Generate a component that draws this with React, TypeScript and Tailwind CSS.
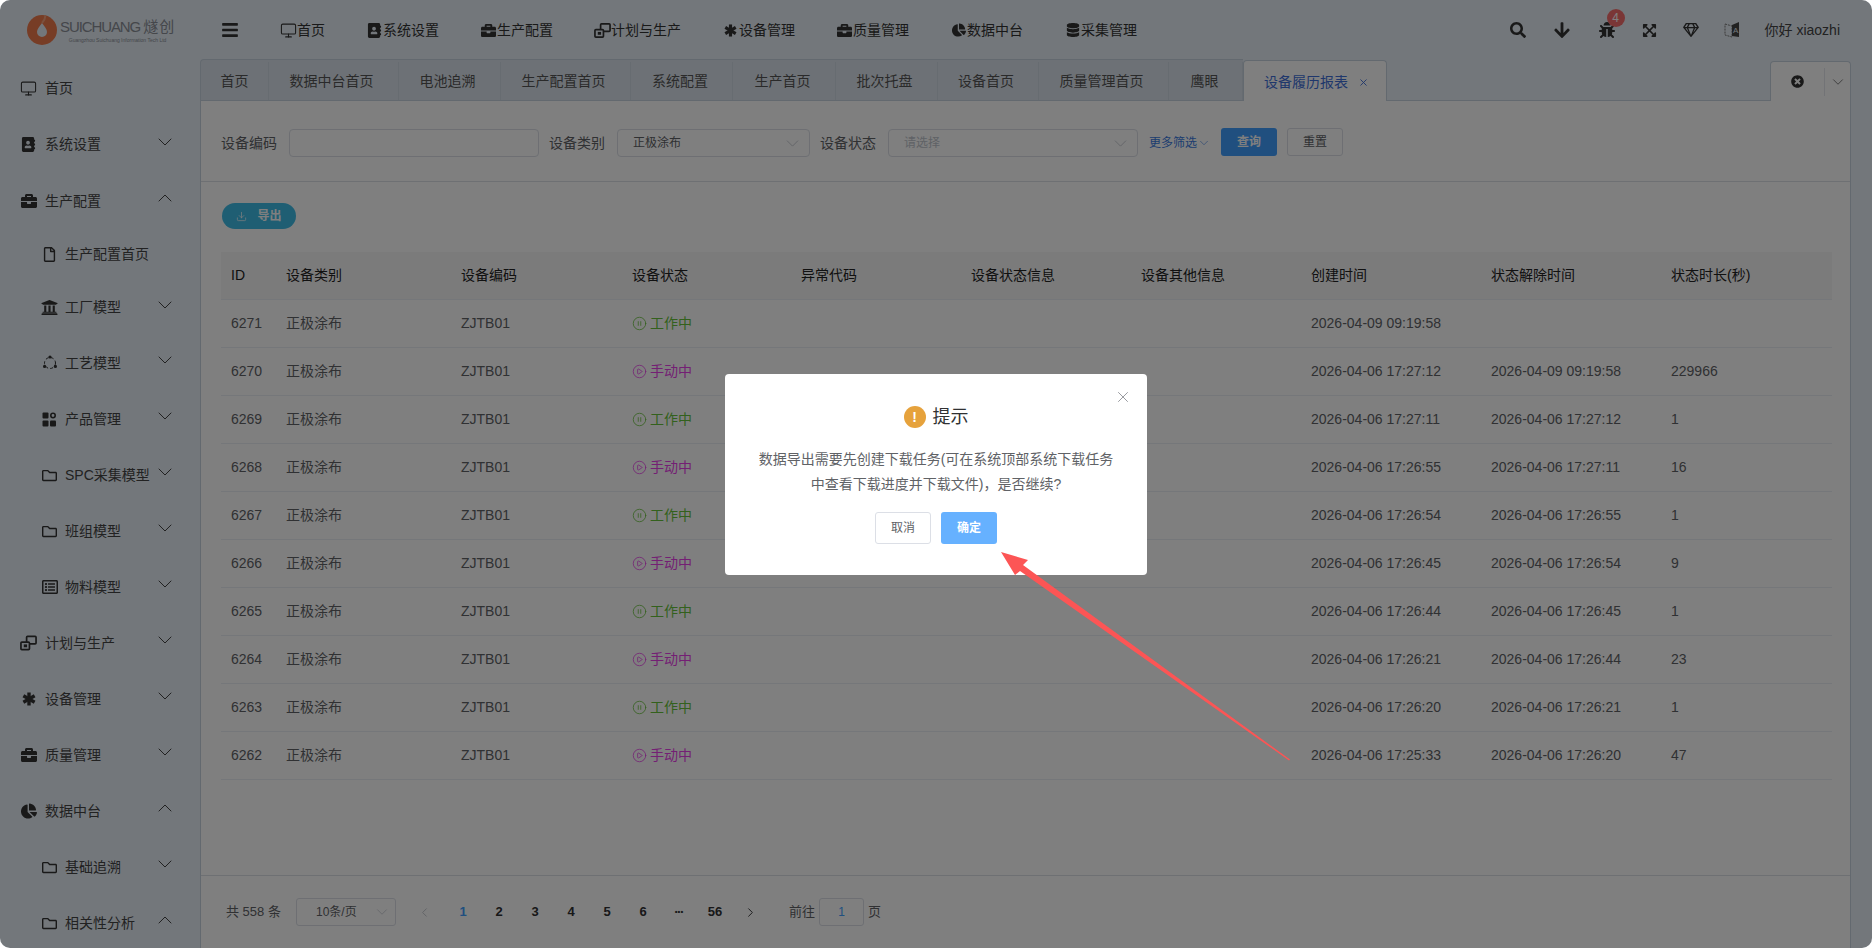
import { ReactNode } from "react";
import { ChevronDown, ChevronUp, ChevronLeft, ChevronRight, Monitor, X, Download, CirclePause, CirclePlay } from "lucide-react";
import {
  FaAddressBook,
  FaArrowDown,
  FaBars,
  FaBriefcase,
  FaBug,
  FaChartPie,
  FaDatabase,
  FaExpandArrowsAlt,
  FaRegFile,
  FaRegFolder,
  FaRegGem,
  FaRegListAlt,
  FaSearch,
  FaTimesCircle,
  FaUniversity,
} from "react-icons/fa";

// Small drawings that the icon packages have no match for
const ProcessIcon = () => (
  <svg width="16" height="16" viewBox="0 0 16 16" fill="none">
    <circle cx="8" cy="8" r="5.5" stroke="currentColor" strokeDasharray="3 2.2" />
    <circle cx="8" cy="2" r="1.6" fill="currentColor" />
    <circle cx="2.6" cy="11.4" r="1.6" fill="currentColor" />
    <circle cx="13.4" cy="11.4" r="1.6" fill="currentColor" />
  </svg>
);

const AppsIcon = () => (
  <svg width="15" height="15" viewBox="0 0 15 15" fill="currentColor">
    <rect x="0.5" y="0.5" width="6" height="6" rx="1" />
    <circle cx="11" cy="3.5" r="2.2" fill="none" stroke="currentColor" strokeWidth="1.6" />
    <rect x="0.5" y="8.5" width="6" height="6" rx="1" />
    <rect x="8" y="8.5" width="6" height="6" rx="1" />
  </svg>
);

const StarIcon = ({ size }: { size: number }) => (
  <svg width={size} height={size} viewBox="0 0 14 14" stroke="currentColor" strokeWidth="3.4">
    <line x1="7" y1="0.5" x2="7" y2="13.5" />
    <line x1="1.4" y1="3.7" x2="12.6" y2="10.3" />
    <line x1="12.6" y1="3.7" x2="1.4" y2="10.3" />
  </svg>
);

const PlanIcon = ({ size }: { size: number }) => (
  <svg width={size} height={size} viewBox="0 0 18 16" fill="none" stroke="currentColor" strokeWidth="1.8">
    <rect x="1" y="7" width="9" height="8" rx="1" />
    <rect x="4" y="9.5" width="3.5" height="3" fill="currentColor" stroke="none" />
    <path d="M7 7V2a1 1 0 0 1 1-1h8a1 1 0 0 1 1 1v6a1 1 0 0 1-1 1h-6" />
  </svg>
);

const TranslateIcon = () => (
  <svg width="16" height="18" viewBox="0 0 16 18">
    <path d="M1 3l7 2v11l-7-2z" fill="none" stroke="#777" strokeDasharray="2 1" />
    <path d="M8 4l7-3v15l-7-1z" fill="#444" />
    <text x="9" y="12" fontSize="8" fill="#e6eef6">A</text>
  </svg>
);

const Logo = () => (
  <div className="flex h-[60px] w-[200px] shrink-0 items-center pl-[27px]">
    <svg width="30" height="30" viewBox="0 0 30 30" className="shrink-0">
      <circle cx="15" cy="15" r="15" fill="#ee7a4c" />
      <path d="M15 8c3 4 5 6 5 9a5 5 0 0 1-10 0c0-3 2-5 5-9z" fill="#e6eef6" />
      <path d="M18 0c1 4-1 6-3 8" stroke="#f7a27c" strokeWidth="2" fill="none" />
    </svg>
    <div className="ml-[3px] flex flex-col">
      <div className="whitespace-nowrap text-[15px] leading-[19px] tracking-[-1.1px] text-[#8a8f96]">
        SUICHUANG <span className="tracking-[1px]">燧创</span>
      </div>
      <div className="mt-[1px] whitespace-nowrap text-center text-[5px] leading-[6px] text-[#8a8f96]">
        Guangzhou Suichuang Information Tech Ltd
      </div>
    </div>
  </div>
);

const topMenus: { label: string; icon: ReactNode; w: string }[] = [
  { label: "首页", icon: <Monitor size={17} strokeWidth={1.5} />, w: "w-[86px]" },
  { label: "系统设置", icon: <FaAddressBook size={15} />, w: "w-[114px]" },
  { label: "生产配置", icon: <FaBriefcase size={15} />, w: "w-[114px]" },
  { label: "计划与生产", icon: <PlanIcon size={17} />, w: "w-[128px]" },
  { label: "设备管理", icon: <StarIcon size={13} />, w: "w-[114px]" },
  { label: "质量管理", icon: <FaBriefcase size={15} />, w: "w-[114px]" },
  { label: "数据中台", icon: <FaChartPie size={14} />, w: "w-[114px]" },
  { label: "采集管理", icon: <FaDatabase size={14} />, w: "w-[100px]" },
];

const TopBar = () => (
  <header className="flex h-[60px] shrink-0 items-center text-[14px] text-[#333]">
    <Logo />
    <FaBars size={18} className="ml-[21px] mr-[41px] text-[#333]" />
    {topMenus.map((m) => (
      <div key={m.label} className={`flex items-center ${m.w}`}>
        <span className="flex w-[17px] shrink-0 justify-center">{m.icon}</span>
        <span className="whitespace-nowrap">{m.label}</span>
      </div>
    ))}
    <div className="ml-auto flex items-center pr-[32px]">
      <FaSearch size={16} className="mr-[27px]" />
      <FaArrowDown size={18} className="mr-[28px]" />
      <div className="relative mr-[27px]">
        <FaBug size={16} />
        <span className="absolute left-[8px] top-[-13px] flex h-[18px] w-[18px] items-center justify-center rounded-full bg-[#f56c6c] text-[12px] text-white">
          4
        </span>
      </div>
      <FaExpandArrowsAlt size={15} className="mr-[26px]" />
      <FaRegGem size={16} className="mr-[25px]" />
      <span className="mr-[25px] flex text-[#555]">
        <TranslateIcon />
      </span>
      <span className="text-[14px] text-[#444]">你好 xiaozhi</span>
    </div>
  </header>
);

const sideMenus: { label: string; icon: ReactNode; sub?: boolean; arrow?: "up" | "down"; h: string }[] = [
  { label: "首页", icon: <Monitor size={17} strokeWidth={1.5} />, h: "h-[56px]" },
  { label: "系统设置", icon: <FaAddressBook size={15} />, arrow: "down", h: "h-[57px]" },
  { label: "生产配置", icon: <FaBriefcase size={16} />, arrow: "up", h: "h-[56px]" },
  { label: "生产配置首页", icon: <FaRegFile size={15} />, sub: true, h: "h-[51px]" },
  { label: "工厂模型", icon: <FaUniversity size={17} />, sub: true, arrow: "down", h: "h-[55px]" },
  { label: "工艺模型", icon: <ProcessIcon />, sub: true, arrow: "down", h: "h-[56px]" },
  { label: "产品管理", icon: <AppsIcon />, sub: true, arrow: "down", h: "h-[56px]" },
  { label: "SPC采集模型", icon: <FaRegFolder size={15} />, sub: true, arrow: "down", h: "h-[56px]" },
  { label: "班组模型", icon: <FaRegFolder size={15} />, sub: true, arrow: "down", h: "h-[56px]" },
  { label: "物料模型", icon: <FaRegListAlt size={16} />, sub: true, arrow: "down", h: "h-[56px]" },
  { label: "计划与生产", icon: <PlanIcon size={18} />, arrow: "down", h: "h-[56px]" },
  { label: "设备管理", icon: <StarIcon size={14} />, arrow: "down", h: "h-[56px]" },
  { label: "质量管理", icon: <FaBriefcase size={16} />, arrow: "down", h: "h-[56px]" },
  { label: "数据中台", icon: <FaChartPie size={16} />, arrow: "up", h: "h-[56px]" },
  { label: "基础追溯", icon: <FaRegFolder size={15} />, sub: true, arrow: "down", h: "h-[56px]" },
  { label: "相关性分析", icon: <FaRegFolder size={15} />, sub: true, arrow: "up", h: "h-[56px]" },
];

const Sidebar = () => (
  <aside className="w-[200px] shrink-0 overflow-hidden text-[14px] text-[#444]">
    {sideMenus.map((m) => (
      <div key={m.label} className={`relative flex items-center ${m.h} ${m.sub ? "pl-[41px]" : "pl-[20px]"}`}>
        <span className="flex w-[17px] shrink-0 justify-center text-[#333]">{m.icon}</span>
        <span className={`whitespace-nowrap ${m.sub ? "ml-[7px]" : "ml-[8px]"}`}>{m.label}</span>
        {m.arrow === "down" && (
          <ChevronDown size={24} strokeWidth={1} className="absolute left-[153px] top-1/2 mt-[-15px] text-[#444]" />
        )}
        {m.arrow === "up" && (
          <ChevronUp size={24} strokeWidth={1} className="absolute left-[153px] top-1/2 mt-[-15px] text-[#444]" />
        )}
      </div>
    ))}
  </aside>
);

const tabs: { label: string; w: string }[] = [
  { label: "首页", w: "w-[68px]" },
  { label: "数据中台首页", w: "w-[130px] pr-[4px]" },
  { label: "电池追溯", w: "w-[102px] pr-[4px]" },
  { label: "生产配置首页", w: "w-[130px] pr-[4px]" },
  { label: "系统配置", w: "w-[102px] pr-[3px]" },
  { label: "生产首页", w: "w-[103px] pr-[3px]" },
  { label: "批次托盘", w: "w-[102px] pr-[4px]" },
  { label: "设备首页", w: "w-[101px] pr-[4px]" },
  { label: "质量管理首页", w: "w-[130px] pr-[4px]" },
  { label: "鹰眼", w: "w-[74px] pr-[2px]" },
];

const TabBar = () => (
  <div className="flex h-[41px] shrink-0 items-end border-b border-[#c6d2de] text-[14px] text-[#555]">
    <div className="flex h-[41px] overflow-hidden rounded-tl-[4px] border-l border-t border-[#c6d2de] bg-[#dbe3ec] pt-[2px]">
      {tabs.map((t) => (
        <div key={t.label} className={`flex items-center justify-center border-r border-[#ced8e2] ${t.w}`}>
          {t.label}
        </div>
      ))}
    </div>
    <div className="mb-[-1px] flex h-[41px] w-[144px] items-center rounded-t-[4px] border-x border-t border-[#c6d2de] bg-white pl-[20px] pt-[2px] text-[#3f6fd8]">
      设备履历报表
      <X size={11} className="ml-[10px]" />
    </div>
    <div className="mb-[-1px] ml-auto flex h-[40px] w-[81px] items-center rounded-t-[4px] border-x border-t border-[#c6d2de] bg-white">
      <span className="flex w-[53px] justify-center">
        <FaTimesCircle size={13} className="text-[#333]" />
      </span>
      <span className="flex h-[28px] flex-1 items-center justify-center border-l border-[#e4e7ed]">
        <ChevronDown size={18} strokeWidth={1} className="text-[#555]" />
      </span>
    </div>
  </div>
);

const Select = ({ w, text, placeholder }: { w: string; text: string; placeholder?: boolean }) => (
  <div className={`flex h-[28px] items-center justify-between rounded-[4px] border border-[#dcdfe6] pl-[15px] pr-[6px] text-[12px] ${w} ${placeholder ? "text-[#c0c4cc]" : "text-[#606266]"}`}>
    {text}
    <ChevronDown size={21} strokeWidth={1} className="text-[#c0c4cc]" />
  </div>
);

const FilterBar = () => (
  <div className="flex h-[81px] shrink-0 items-center border-b border-[#dde1e7] pt-[3px] pl-[20px] text-[14px] text-[#606266]">
    <span className="mr-[12px] mt-[1px]">设备编码</span>
    <div className="mt-[1px] h-[28px] w-[250px] rounded-[4px] border border-[#dcdfe6]" />
    <span className="ml-[10px] mr-[12px] mt-[1px]">设备类别</span>
    <div className="mt-[1px]"><Select w="w-[193px]" text="正极涂布" /></div>
    <span className="ml-[10px] mr-[12px] mt-[1px]">设备状态</span>
    <div className="mt-[1px]"><Select w="w-[250px]" text="请选择" placeholder /></div>
    <span className="ml-[11px] mt-[1px] flex items-center text-[12px] text-[#3a7be0]">
      更多筛选
      <ChevronDown size={14} strokeWidth={1} />
    </span>
    <button className="ml-[10px] mb-[2px] h-[28px] w-[56px] rounded-[3px] bg-[#409eff] text-[12px] font-bold text-white">查询</button>
    <button className="ml-[10px] mb-[2px] h-[28px] w-[56px] rounded-[3px] border border-[#dcdfe6] text-[12px] text-[#606266]">重置</button>
  </div>
);

type Row = { id: number; working: boolean; created: string; ended: string; secs: string };

const rows: Row[] = [
  { id: 6271, working: true, created: "2026-04-09 09:19:58", ended: "", secs: "" },
  { id: 6270, working: false, created: "2026-04-06 17:27:12", ended: "2026-04-09 09:19:58", secs: "229966" },
  { id: 6269, working: true, created: "2026-04-06 17:27:11", ended: "2026-04-06 17:27:12", secs: "1" },
  { id: 6268, working: false, created: "2026-04-06 17:26:55", ended: "2026-04-06 17:27:11", secs: "16" },
  { id: 6267, working: true, created: "2026-04-06 17:26:54", ended: "2026-04-06 17:26:55", secs: "1" },
  { id: 6266, working: false, created: "2026-04-06 17:26:45", ended: "2026-04-06 17:26:54", secs: "9" },
  { id: 6265, working: true, created: "2026-04-06 17:26:44", ended: "2026-04-06 17:26:45", secs: "1" },
  { id: 6264, working: false, created: "2026-04-06 17:26:21", ended: "2026-04-06 17:26:44", secs: "23" },
  { id: 6263, working: true, created: "2026-04-06 17:26:20", ended: "2026-04-06 17:26:21", secs: "1" },
  { id: 6262, working: false, created: "2026-04-06 17:25:33", ended: "2026-04-06 17:26:20", secs: "47" },
];

const headers = [
  { label: "ID", w: "w-[55px]" },
  { label: "设备类别", w: "w-[175px]" },
  { label: "设备编码", w: "w-[171px]" },
  { label: "设备状态", w: "w-[169px]" },
  { label: "异常代码", w: "w-[170px]" },
  { label: "设备状态信息", w: "w-[170px]" },
  { label: "设备其他信息", w: "w-[170px]" },
  { label: "创建时间", w: "w-[180px]" },
  { label: "状态解除时间", w: "w-[180px]" },
  { label: "状态时长(秒)", w: "w-[171px]" },
];

const DataTable = () => (
  <table className="w-[1611px] table-fixed border-collapse text-left text-[14px] text-[#606266]">
    <thead>
      <tr className="h-[47px] border-b border-[#ebeef5] bg-[#f7f7f7]">
        {headers.map((h) => (
          <th key={h.label} className={`pl-[10px] font-normal text-[#222] ${h.w}`}>
            {h.label}
          </th>
        ))}
      </tr>
    </thead>
    <tbody>
      {rows.map((r) => (
        <tr key={r.id} className="h-[48px] border-b border-[#ebeef5]">
          <td className="pl-[10px]">{r.id}</td>
          <td className="pl-[10px]">正极涂布</td>
          <td className="pl-[10px]">ZJTB01</td>
          <td className="pl-[10px]">
            {r.working ? (
              <span className="flex items-center gap-[3px] text-[#67c23a]">
                <CirclePause size={15} strokeWidth={1.25} />
                工作中
              </span>
            ) : (
              <span className="flex items-center gap-[3px] text-[#e83fe8]">
                <CirclePlay size={15} strokeWidth={1.25} />
                手动中
              </span>
            )}
          </td>
          <td />
          <td />
          <td />
          <td className="pl-[10px]">{r.created}</td>
          <td className="pl-[10px]">{r.ended}</td>
          <td className="pl-[10px]">{r.secs}</td>
        </tr>
      ))}
    </tbody>
  </table>
);

const Pagination = () => (
  <div className="flex h-[73px] shrink-0 items-center border-t border-[#dde1e7] pl-[25px] text-[13px] text-[#606266]">
    <span className="w-[70px]">共 558 条</span>
    <div className="flex h-[28px] w-[100px] items-center justify-between rounded-[3px] border border-[#dcdfe6] pl-[19px] pr-[4px] text-[12px]">
      10条/页
      <ChevronDown size={18} strokeWidth={1} className="text-[#c0c4cc]" />
    </div>
    <ChevronLeft size={15} strokeWidth={1.5} className="ml-[21px] text-[#c0c4cc]" />
    <div className="ml-[13px] flex font-bold text-[#303133]">
      <span className="w-[36px] text-center text-[#409eff]">1</span>
      {["2", "3", "4", "5", "6", "•••", "56"].map((p) => (
        <span key={p} className={`w-[36px] text-center ${p === "•••" ? "text-[8px] leading-[20px]" : ""}`}>
          {p}
        </span>
      ))}
    </div>
    <ChevronRight size={15} strokeWidth={1.5} className="ml-[10px] text-[#303133]" />
    <span className="ml-[31px] text-[13px]">前往</span>
    <div className="mx-[4px] flex h-[28px] w-[45px] items-center justify-center rounded-[3px] border border-[#dcdfe6] text-[12px] text-[#409eff]">1</div>
    <span>页</span>
  </div>
);

const ConfirmDialog = () => (
  <div className="absolute inset-0 z-10 flex items-center justify-center bg-black/50">
    <div className="relative h-[201px] w-[422px] rounded-[4px] bg-white pt-[31px] text-center">
      <X size={18} strokeWidth={1} className="absolute right-[15px] top-[14px] text-[#777a80]" />
      <div className="flex items-center justify-center gap-[7px] text-[18px] leading-[24px] text-[#303133]">
        <span className="flex h-[22px] w-[22px] items-center justify-center rounded-full bg-[#e6a23c] text-[14px] font-bold text-white">!</span>
        提示
      </div>
      <p className="mt-[18px] text-[14px] leading-[25px] text-[#606266]">
        数据导出需要先创建下载任务(可在系统顶部系统下载任务
        <br />
        中查看下载进度并下载文件)，是否继续?
      </p>
      <div className="mt-[15px] flex justify-center gap-[10px]">
        <button className="h-[32px] w-[56px] rounded-[3px] border border-[#dcdfe6] text-[12px] text-[#606266]">取消</button>
        <button className="h-[32px] w-[56px] rounded-[3px] bg-[#66b1ff] text-[12px] font-bold text-white">确定</button>
      </div>
    </div>
    {/* annotation arrow drawn on the screenshot */}
    <svg className="absolute left-0 top-0" width="1872" height="948" viewBox="0 0 1872 948">
      <polygon points="1001,552 1028,560 1023,565 1290,759.5 1289,760.5 1020,571 1015,575" fill="#fc5555" />
    </svg>
  </div>
);

export default function App() {
  return (
    <div className="h-screen w-full overflow-hidden bg-white [font-family:'Liberation_Sans','Noto_Sans_CJK_SC',sans-serif]">
      <div className="relative flex h-full flex-col overflow-hidden rounded-[10px] bg-[#e6eef6]">
        <TopBar />
        <div className="flex min-h-0 flex-1">
          <Sidebar />
          <main className="flex min-w-0 flex-1 flex-col pr-[21px]">
            <TabBar />
            <div className="flex min-h-0 flex-1 flex-col border-x border-[#c6d2de] bg-white">
              <FilterBar />
              <div className="min-h-0 flex-1 pl-[20px] pt-[21px]">
                <button className="mb-[23px] ml-[1px] flex h-[26px] w-[74px] items-center justify-center gap-[10px] rounded-full bg-[#3fbce6] text-[12px] font-bold text-white">
                  <Download size={11} strokeWidth={1.5} />
                  导出
                </button>
                <DataTable />
              </div>
              <Pagination />
            </div>
          </main>
        </div>
        <ConfirmDialog />
      </div>
    </div>
  );
}
